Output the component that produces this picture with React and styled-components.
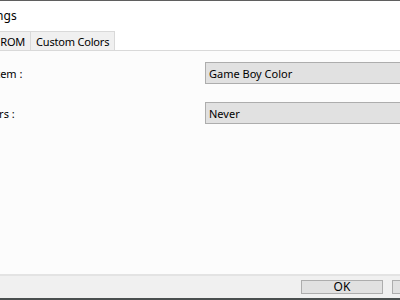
import React from "react";
import styled, { createGlobalStyle } from "styled-components";

const Global = createGlobalStyle`
  html, body { margin: 0; padding: 0; background: #ffffff; }
  body { font-family: "Noto Sans", "Open Sans", "DejaVu Sans", sans-serif; font-size: 11px; color: #000; }
`;

const Viewport = styled.div`
  width: 400px;
  height: 300px;
  overflow: hidden;
  position: relative;
  background: #ffffff;
`;

const Dialog = styled.div`
  margin-left: -120px;
  width: 640px;
  height: 300px;
  display: flex;
  flex-direction: column;
  border-top: 1px solid #5f5f5f;
  border-bottom: 2px solid #4a4f4f;
  box-sizing: border-box;
`;

const TitleBar = styled.div`
  height: 30px;
  display: flex;
  align-items: center;
  padding-left: ${(p) => p.$indent}px;
  background: #ffffff;
  font-size: 12px;
  line-height: 1;
  flex: none;
`;

const TabStrip = styled.div`
  display: flex;
  align-items: flex-end;
  height: 19px;
  padding-left: ${(p) => p.$indent}px;
  background: #ffffff;
  flex: none;
`;

const Tab = styled.div`
  height: 19px;
  box-sizing: border-box;
  padding: 0 5px;
  display: flex;
  align-items: center;
  background: #f0f0f0;
  border: 1px solid #d9d9d9;
  border-bottom: none;
  margin-right: -1px;
  white-space: nowrap;
  font-size: 11px;
  letter-spacing: -0.2px;
`;

const Panel = styled.div`
  flex: 1;
  background: #fcfcfc;
  border-top: 1px solid #d9d9d9;
  padding: 11px 0 0 ${(p) => p.$indent}px;
  display: grid;
  grid-template-columns: ${(p) => p.$labelCol}px 300px;
  grid-auto-rows: 22px;
  row-gap: 18px;
  align-content: start;
`;

const Label = styled.div`
  display: flex;
  align-items: center;
  white-space: nowrap;
`;

const Combo = styled.div`
  box-sizing: border-box;
  height: 22px;
  background: #e1e1e1;
  border: 1px solid #adadad;
  display: flex;
  align-items: center;
  padding-left: 3px;
  font-size: 11px;
`;

const Footer = styled.div`
  height: 24px;
  flex: none;
  background: #f0f0f0;
  border-top: 2px solid #e3e3e3;
  display: flex;
  align-items: center;
  padding-left: ${(p) => p.$indent}px;
  gap: 9px;
  box-sizing: border-box;
`;

const Button = styled.div`
  width: 82px;
  height: 14px;
  box-sizing: border-box;
  background: #e1e1e1;
  border: 1px solid #adadad;
  display: flex;
  align-items: center;
  justify-content: center;
  font-size: 12px;
  line-height: 1;
`;

export default function App() {
  return (
    <Viewport>
      <Global />
      <Dialog>
        <TitleBar $indent={91}>Settings</TitleBar>
        <TabStrip $indent={88}>
          <Tab>Boot ROM</Tab>
          <Tab>Custom Colors</Tab>
        </TabStrip>
        <Panel $indent={48} $labelCol={277}>
          <Label>Emulated system :</Label>
          <Combo>Game Boy Color</Combo>
          <Label>Display borders :</Label>
          <Combo>Never</Combo>
        </Panel>
        <Footer $indent={421}>
          <Button>OK</Button>
          <Button>Cancel</Button>
        </Footer>
      </Dialog>
    </Viewport>
  );
}
